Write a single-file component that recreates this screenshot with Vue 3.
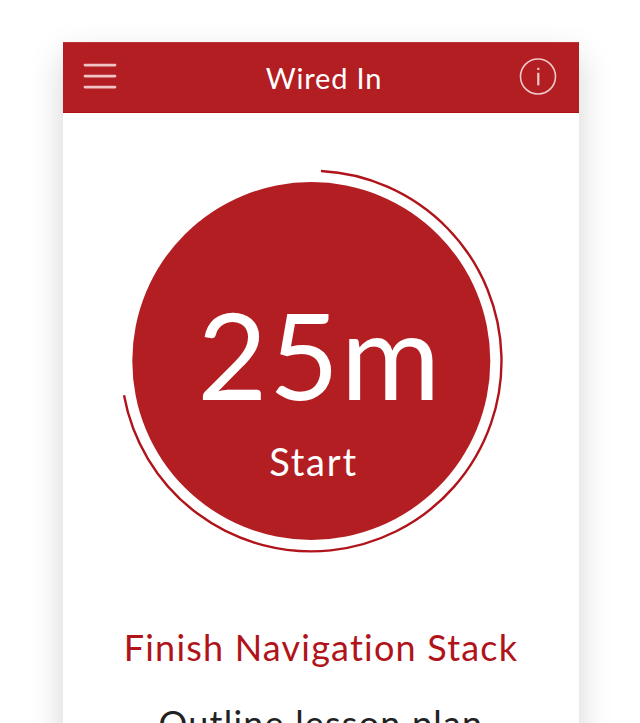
<script setup>
const duration = '25m'
const tasks = [
  { name: 'Finish Navigation Stack', active: true },
  { name: 'Outline lesson plan', active: false },
]
</script>

<template>
  <main class="stage">
    <section class="phone">
      <header class="bar">
        <svg class="menu" width="34" height="30" viewBox="0 0 34 30" aria-label="Menu">
          <path d="M2 3.1H32M2 14.1H32M2 25.1H32" />
        </svg>
        <h1 class="title">Wired In</h1>
        <svg class="info" width="38" height="38" viewBox="0 0 38 38" aria-label="Info">
          <circle cx="19" cy="18.5" r="17.5" />
          <path d="M19.3 14.8V27.4" />
          <path d="M19.3 9.8V12" />
        </svg>
      </header>

      <div class="timer">
        <svg class="dial" width="386" height="386" viewBox="0 0 386 386">
          <circle class="disc" cx="191.3" cy="193" r="179" />
          <path class="arc" d="M201 3A190.3 190.3 0 1 1 4 227.3" />
        </svg>
        <div class="readout">
          <span class="duration">{{ duration }}</span>
          <span class="action">Start</span>
        </div>
      </div>

      <ul class="tasks">
        <li v-for="task in tasks" :key="task.name" :class="{ active: task.active }">{{ task.name }}</li>
      </ul>
    </section>
  </main>
</template>

<style>
body {
  background: #fff;
  overflow: hidden;
}
</style>

<style scoped>
.stage {
  height: 723px;
  box-sizing: border-box;
  padding: 42px 61px 0 63px;
  overflow: hidden;
  font-family: Lato, "Liberation Sans", sans-serif;
}
.phone {
  height: 760px;
  background: #fff;
  box-shadow: 0 14px 32px rgba(0, 0, 0, 0.17);
}
.bar {
  height: 71px;
  box-sizing: border-box;
  padding: 0 22px 2px 20px;
  display: grid;
  grid-template-columns: 38px 1fr 38px;
  align-items: center;
  background: #b31e23;
  box-shadow: inset 0 1px #bd3438, inset 0 -1px #ad0f14;
}
.menu {
  fill: none;
  stroke: #f0c3c5;
  stroke-width: 2.8;
  stroke-linecap: round;
}
.title {
  margin: 2px 0 0 8px;
  color: #fff;
  font-size: 29px;
  line-height: 36px;
  font-weight: 400;
  letter-spacing: 0.8px;
  text-align: center;
}
.info {
  fill: none;
  stroke: #f1c8ca;
  stroke-width: 1.6;
}
.info path {
  stroke-width: 2.2;
}
.timer {
  display: grid;
  width: 386px;
  margin: 55px 0 0 57px;
}
.dial,
.readout {
  grid-area: 1 / 1;
}
.disc {
  fill: #b31e23;
}
.arc {
  fill: none;
  stroke: #b0141a;
  stroke-width: 2.4;
}
.readout {
  display: flex;
  flex-direction: column;
  align-items: center;
  padding-top: 113px;
  color: #fff;
}
.duration {
  padding-left: 13px;
  font-size: 121px;
  line-height: 145px;
  letter-spacing: 1.6px;
}
.action {
  margin-top: 12px;
  padding-left: 1px;
  font-size: 38px;
  line-height: 46px;
  letter-spacing: 1.8px;
}
.tasks {
  margin: 71px 0 0;
  padding: 0;
  list-style: none;
  font-size: 36px;
  line-height: 44px;
  text-align: center;
  letter-spacing: 1.2px;
  color: #222;
  white-space: nowrap;
}
.tasks li {
  margin-bottom: 32px;
}
.tasks .active {
  color: #b0141a;
}
</style>
